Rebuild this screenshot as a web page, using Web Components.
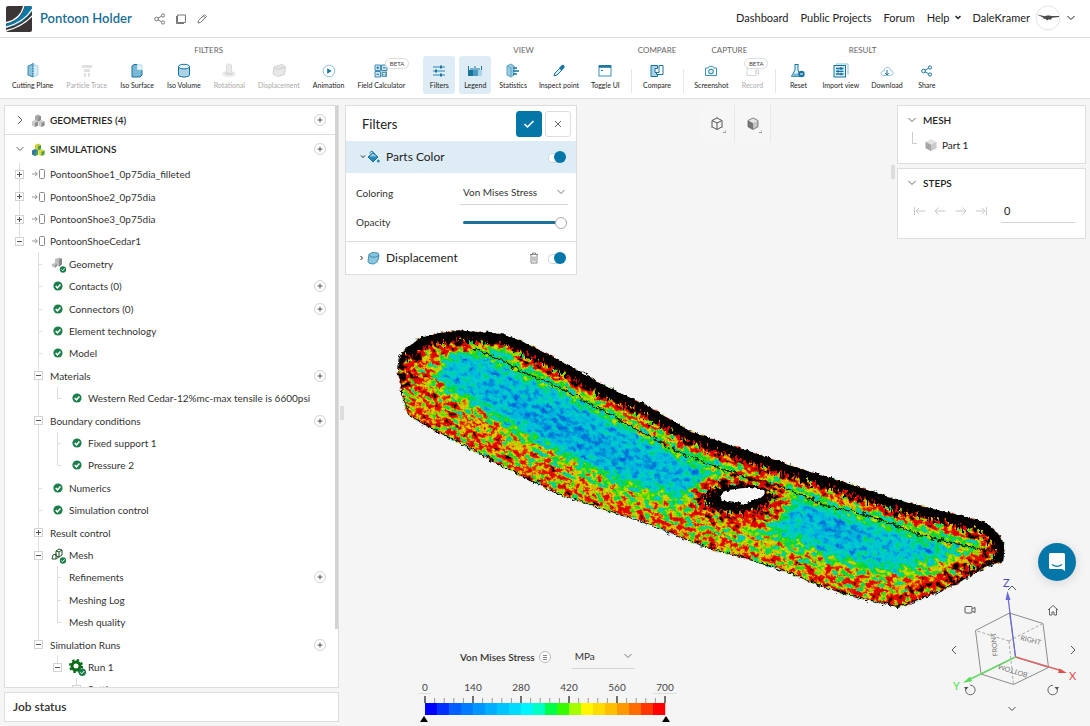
<!DOCTYPE html>
<html lang="en">
<head>
<meta charset="utf-8">
<title>Pontoon Holder</title>
<style>
html,body{margin:0;height:100%}
body{font:10px/14px Lato,"Open Sans",sans-serif;color:#333;background:#f5f5f5}
</style>
</head>
<body>
<sim-workbench></sim-workbench>
<script>
const BASE = `*{box-sizing:border-box}
:host{display:block}:host([hidden]){display:none}
button,input,select{font:inherit;color:inherit;margin:0;padding:0;border:0;background:none}
button{display:inline-flex;align-items:center;justify-content:center;cursor:pointer}
a{color:inherit;text-decoration:none}h1,h2,h3{margin:0;font:inherit}`;

function define(name, css, html) {
  customElements.define(name, class extends HTMLElement {
    connectedCallback() {
      if (this.shadowRoot) return;
      const root = this.attachShadow({ mode: 'open' });
      const t = document.createElement('template');
      t.innerHTML = `<style>${BASE}${css}</style>${typeof html === 'function' ? html(this) : html}`;
      root.append(document.importNode(t.content, true));
    }
  });
}

const B = '#16749f';
const check = (x, y, r) => `<circle cx="${x}" cy="${y}" r="${r}" fill="#1a7f4b"/><path d="M${x - r * .5} ${y}l${r * .38} ${r * .4} ${r * .65} ${-r * .75}" fill="none" stroke="#fff" stroke-width="${r > 4 ? 1.5 : 1}"/>`;
const ICONS = {
  logo: [26, 26, `<defs><clipPath id="c"><rect width="26" height="26" rx="2"/></clipPath></defs><g clip-path="url(#c)"><rect width="26" height="26" fill="#3b3635"/><path d="M0 18C11 15 18 8 19-1h8v5C21 14 12 20 0 22z" fill="#0f76a6"/><path d="M-1 17C9 15 16 9 18-1M-1 21.500C12 18 21 12 27 2M-1 25C12 22 20 17 27 9" fill="none" stroke="#fff" stroke-width="1.300"/></g>`],
  share: [16, 14, `<g fill="none" stroke="currentColor"><circle cx="4.500" cy="7" r="1.800"/><circle cx="11" cy="3.500" r="1.600"/><circle cx="11" cy="10.500" r="1.600"/><path d="M6 6.200l3.600-2M6 7.800l3.600 2"/></g>`],
  copy: [12, 12, `<path d="M2.500 2h8v7.500h-8zM1.500 3v7.500H9" fill="none" stroke="currentColor"/>`],
  pencil: [12, 12, `<path d="M2 10l.6-2.600L8.500 1.600l2 2L4.600 9.400zM7.300 2.800l2 2" fill="none" stroke="currentColor"/>`],
  chevd: [10, 6, `<path d="M1.500 1L5 4.500 8.500 1" fill="none" stroke="currentColor"/>`],
  chevr: [6, 10, `<path d="M1 1l4 4-4 4" fill="none" stroke="currentColor"/>`],
  chevl: [6, 10, `<path d="M5 1L1 5l4 4" fill="none" stroke="currentColor"/>`],
  chevu: [10, 6, `<path d="M1 5l4-4 4 4" fill="none" stroke="currentColor"/>`],
  caret: [6, 5, `<path d="M.5 1L3 3.500 5.500 1" fill="none" stroke="currentColor" stroke-width="1.500"/>`],
  carets: [6, 4, `<path d="M1 .5l2 2 2-2" fill="none" stroke="currentColor"/>`],
  caretr: [4, 6, `<path d="M.5 1l2 2-2 2" fill="none" stroke="currentColor"/>`],
  plane: [26, 26, `<circle cx="13" cy="13" r="12" fill="#fff" stroke="#e5e5e5"/><path d="M2 9.500l8 1.700 2-.7h3l1 .6 8-.1v1l-7 .8-1 2-2-.5-2 1.200-1.500-1.800-1.500.3-1-1.500z" fill="#4a4a4a"/>`],
  cut: [14, 15, `<path d="M7 1L2 3v9l5 2z" fill="#8cc4de" stroke="${B}" stroke-width=".8"/><path d="M7 1l5 2v9l-5 2z" fill="#d8ecf5" stroke="#9ccbe0" stroke-width=".8"/><path d="M7 0v15" stroke="${B}" stroke-dasharray="1.500 1"/>`],
  trace: [14, 15, `<path d="M2 2h10v3H2zM4 6h6v3H4zM4 10h2v4H4zM8 10h2v4H8z" fill="#d5d5d5"/>`],
  isos: [14, 15, `<path d="M2 3l2-1.500h3V7h5v5l-2 2H2z" fill="#7ab9d6" stroke="${B}"/><path d="M7 2h5v5H7z" fill="#e6f3f9" stroke="#b7d9e8"/>`],
  isov: [14, 15, `<path d="M1.500 4v8c0 1 2 2 5.500 2s5.500-1 5.500-2V4" fill="#a9d3e6" stroke="${B}"/><ellipse cx="7" cy="3.600" rx="5.500" ry="2.300" fill="#e9f5fa" stroke="${B}"/>`],
  rot: [16, 15, `<ellipse cx="8" cy="11" rx="7" ry="3.300" fill="#e6e6e6"/><ellipse cx="8" cy="10" rx="4" ry="2" fill="#c4c4c4"/><path d="M5.500 2v8h5V2c0-1.300-5-1.300-5 0z" fill="#e2e2e2" stroke="#cfcfcf"/>`],
  disp: [16, 15, `<path d="M3 4l8-2.500 3.500 2-1 8-7 2L2 11z" fill="#dedede" stroke="#bdbdbd"/><path d="M3 4l3.500 2.500L14 4" fill="none" stroke="#bdbdbd"/>`],
  anim: [14, 14, `<circle cx="7" cy="7" r="5.800" fill="#fff" stroke="#8fc2da"/><path d="M5.200 4.200l4.500 2.800-4.500 2.800z" fill="${B}"/>`],
  calc: [14, 14, `<path d="M1 1h5.500v5.500H1zM7.500 1H13v5.500H7.500zM1 7.500h5.500V13H1z" fill="#cfe7f2" stroke="${B}" stroke-width=".8"/><path d="M7.500 7.500H13V13H7.500z" fill="${B}" opacity=".75"/><path d="M2.500 3.800h2.500M3.800 2.500V5M9 3.800h2.500M2.500 10.300h2.500" stroke="${B}"/><path d="M9 9.500h2.500M9 11.200h2.500" stroke="#fff"/>`],
  filters: [14, 14, `<path d="M1 3h12M1 7h12M1 11h12" stroke="#2487b3" stroke-width="1.200"/><path d="M9 1.500v3M4 5.500v3M9 9.500v3" stroke="${B}" stroke-width="2"/>`],
  legend: [14, 14, `<rect x="0" y="6" width="14" height="6" fill="#a9d3e6"/><rect x="0" y="6" width="10" height="6" fill="#4a9bc0"/><rect x="0" y="6" width="5" height="6" fill="${B}"/><path d="M.5 6V2M3 6V4M5 6V4M7 6V2M9 6V4M11 6V4M13.500 6V2" stroke="${B}"/>`],
  stats: [16, 15, `<path d="M2 3l4-2 3 2v9l-3 2-4-2z" fill="#9ccbe0" stroke="#5aa5c8"/><path d="M2 3l4 2v9" fill="none" stroke="#5aa5c8"/><path d="M8 5h4M8 8h6M8 11h4" stroke="${B}" stroke-width="1.500"/>`],
  dropper: [14, 14, `<path d="M2 12l1-3 5-5 2 2-5 5z" fill="#d8ecf5" stroke="${B}"/><path d="M7 4l3-3c1-.8 3.500 1 2.500 2.500l-3 3.200z" fill="${B}"/>`],
  win: [14, 14, `<rect x="1" y="1.500" width="12" height="10.500" fill="#fff" stroke="#3c92b8"/><path d="M1 2.500h12" stroke="${B}" stroke-width="2.500"/><path d="M3 6.500h2" stroke="${B}"/>`],
  cmp: [14, 14, `<path d="M1 1.500h6.500v3H5v4h2.500v4H1z" fill="#a9d3e6" stroke="${B}"/><path d="M9 1.500h4v9H6.500v-2H9z" fill="#fff" stroke="${B}"/>`],
  shot: [14, 14, `<path d="M1.500 4h2.800l1-1.700h3.400l1 1.700h2.800v7.500h-11z" fill="#fff" stroke="#3c92b8"/><circle cx="7" cy="7.500" r="2.400" fill="#d8ecf5" stroke="${B}"/>`],
  rec: [14, 14, `<path d="M1 2h9M2 4.500h9v7H2zM11 7l2.500-1.200v4.400L11 9z" fill="none" stroke="#c4c4c4"/>`],
  reset: [16, 15, `<path d="M4.500 1.500h4M5 2v5l-3.500 6.500h9L8 7V2" fill="#e0f0f7" stroke="${B}"/><path d="M3 10.500h6l1.500 3h-9z" fill="#7ab9d6"/><circle cx="11.500" cy="11" r="3.200" fill="${B}"/><path d="M10 11h3" stroke="#fff"/>`],
  imp: [16, 15, `<path d="M3 1h12v11" fill="none" stroke="#8fc2da"/><rect x="1" y="2.500" width="11.500" height="11.500" fill="#d8ecf5" stroke="${B}"/><path d="M3 5.500h7.500M3 8.300h7.500M3 11h7.500M8 4v3M5 7v2.600M8 9.700v2.600" stroke="${B}" stroke-width="1.300"/>`],
  cloud: [14, 14, `<path d="M4 11.500c-4 0-3.600-5 .2-4.600C4.500 2 11 2.500 10.500 6.500c3.600 0 3.200 5 0 5z" fill="#fff" stroke="#8fc2da"/><path d="M7 6v5M5.200 9L7 11l1.800-2" fill="none" stroke="${B}"/>`],
  geo: [14, 13, `<path d="M4 2l3-1.500L10 2v4L7 7.500 4 6z" fill="#a8a8a8"/><path d="M1 7.500L4 6l3 1.500v4L4 13l-3-1.500zM7.500 7.500L10.500 6l3 1.500v4l-3 1.500-3-1.500z" fill="#c9c9c9"/><path d="M4 9v4l3-1.500v-4zM10.500 9v4l3-1.500v-4zM7 3.500v4L10 6V2z" fill="#8b8b8b"/>`],
  sim: [14, 13, `<path d="M4 2l3-1.500L10 2v4L7 7.500 4 6z" fill="#c6cf2c"/><path d="M1 7.500L4 6l3 1.500v4L4 13l-3-1.500z" fill="#2f78a5"/><path d="M7.500 7.500L10.500 6l3 1.500v4l-3 1.500-3-1.500z" fill="#d3d834"/><path d="M4 9v4l3-1.500v-4zM10.500 9v4l3-1.500v-4zM7 3.500v4L10 6V2z" fill="#4b9b50"/>`],
  arrowbox: [14, 12, `<path d="M0 6h5M3 4l2.500 2L3 8" fill="none" stroke="#999"/><rect x="7.500" y="1.500" width="5" height="9" rx="1" fill="#fff" stroke="#8a8a8a"/>`],
  ok: [12, 12, check(6, 6, 4.6)],
  geok: [16, 18, `<path d="M5 4l4-1.500 3 1v6l-3 2-2-1-2 2-3-1V9l3-1z" fill="#bdbdbd"/><path d="M9 4.500v7l3-2V3.500zM5 10.500V13l2-2V9z" fill="#888"/>${check(13, 14.5, 3.2)}`],
  meshok: [16, 18, `<path d="M6 5l3-2 3 1v5L9 11 6 10zM6 5l3 1v5M9 6l3-2M3 9l3-1v5H2zM6 13l3-2" fill="#fff" stroke="#244f24"/>${check(13, 14.5, 3.2)}`],
  gearok: [19, 20, `<circle cx="9" cy="9" r="4" fill="none" stroke="#0c6b17" stroke-width="3"/><circle cx="9" cy="9" r="6" fill="none" stroke="#0c6b17" stroke-width="2.200" stroke-dasharray="2.360 2.360"/>${check(15.3, 15.3, 3.7)}`],
  bucket: [14, 14, `<path d="M2 7l5-4.500 5 4.500-5 5z" fill="#2b88b5" stroke="${B}"/><path d="M3.500 6.500h7L7 3.500z" fill="#9ccbe0"/><path d="M4 3.500C4 0 8 1 8 4" fill="none" stroke="${B}"/><circle cx="12.300" cy="11" r="1.500" fill="#2b88b5"/>`],
  dispb: [14, 14, `<path d="M3 3.500l3-2 6 .5 1 2.500-1.500 6L8 13l-4.500-.5L2 10.500z" fill="#8cc4de" stroke="#3c92b8"/><path d="M3 3.500l1.500 2.300 5 .4L13 4.500" fill="none" stroke="#3c92b8"/>`],
  trash: [10, 12, `<path d="M1 2.500h8M3.500 2.500V1h3v1.500M2 3v8h6V3M4 4.500v5M6 4.500v5" fill="none" stroke="#858585"/>`],
  tick: [12, 10, `<path d="M1.500 5l3 3 6-6" fill="none" stroke="#fff" stroke-width="1.500"/>`],
  cross: [8, 8, `<path d="M1 1l6 6M7 1L1 7" fill="none" stroke="#666"/>`],
  cubew: [18, 18, `<path d="M9 3l5 2.500v6.300L9 14.500 4 11.800V5.500zM4 5.500l5 2.500 5-2.500M9 8v6.500" fill="none" stroke="#555"/><path d="M9 1.500V3M2.800 12.500l1.200-.7M15.200 12.500l-1.200-.7" stroke="#999"/><path d="M15 17.500h3v-2.500" fill="none" stroke="#999"/>`],
  cubes: [18, 18, `<path d="M9 3l5 2.500L9 8 4 5.500z" fill="#e6e6e6"/><path d="M4 5.500L9 8v6.500l-5-2.700z" fill="#757575"/><path d="M14 5.500L9 8v6.500l5-2.700z" fill="#c4c4c4"/><path d="M9 3l5 2.500v6.300L9 14.500 4 11.800V5.500z" fill="none" stroke="#666" stroke-width=".8"/><path d="M15 17.500h3v-2.500" fill="none" stroke="#999"/>`],
  part: [12, 14, `<path d="M6 1l5.500 2.700L6 6.500.5 3.700z" fill="#e4e4e4"/><path d="M.5 3.700L6 6.500V13L.5 10.200z" fill="#a6a6a6"/><path d="M11.500 3.700L6 6.500V13l5.500-2.800z" fill="#cacaca"/>`],
  first: [12, 10, `<path d="M1.500 1v8M3 5h9M6 2L3 5l3 3" fill="none" stroke="#c8c8c8"/>`],
  prev: [12, 10, `<path d="M1 5h10.500M4.500 1.500L1 5l3.500 3.500" fill="none" stroke="#c8c8c8"/>`],
  next: [12, 10, `<path d="M.5 5H11M7.500 1.500L11 5 7.500 8.500" fill="none" stroke="#c8c8c8"/>`],
  last: [12, 10, `<path d="M10.500 1v8M0 5h9M6 2l3 3-3 3" fill="none" stroke="#c8c8c8"/>`],
  cam: [12, 10, `<rect x="1" y="1.500" width="7" height="6.500" rx="1" fill="none" stroke="#555"/><path d="M8.500 3.500l2.500-1v5l-2.500-1" fill="none" stroke="#555"/>`],
  home: [12, 12, `<path d="M1 6l5-4.500L11 6M2.500 5v6h2.500V8h2v3h2.500V5" fill="none" stroke="#666"/>`],
  ccw: [14, 14, `<path d="M3.200 4.500a4.800 4.800 0 1 0 4-2.300" fill="none" stroke="#666"/><path d="M1 4h4.500L3 7z" fill="#555"/>`],
  cw: [14, 14, `<path d="M10.800 4.500a4.800 4.800 0 1 1-4-2.300" fill="none" stroke="#666"/><path d="M13 4H8.500L11 7z" fill="#555"/>`],
  chat: [20, 20, `<path d="M3.500 1h13A1.500 1.500 0 0 1 18 2.500V19l-3-2H3.500A1.500 1.500 0 0 1 2 15.500v-13A1.500 1.500 0 0 1 3.500 1z" fill="#fff"/><path d="M5 12.500c3 2.200 7 2.200 10 0" fill="none" stroke="#0576a8" stroke-width="1.300"/>`]
};
define('ui-icon', `:host{display:inline-flex;flex:none}svg{display:block}`, el => {
  const [w, h, body] = ICONS[el.getAttribute('name')];
  return `<svg width="${w}" height="${h}" viewBox="0 0 ${w} ${h}" aria-hidden="true">${body}</svg>`;
});
const icon = n => `<ui-icon name="${n}"></ui-icon>`;

define('add-button', `:host{display:inline-flex}
button{width:12px;height:12px;border:1px solid #d2d2d2;border-radius:50%;background:#fff}`,
`<button aria-label="Add"><svg width="6" height="6" viewBox="0 0 6 6"><path d="M3 .5v5M.5 3h5" stroke="#555"/></svg></button>`);

/* Top bar */
define('app-header', `:host{display:flex;align-items:center;height:38px;padding:0 14px 0 6px;background:#fff;border-bottom:1px solid #ddd}
h1{margin-left:8px;font-size:13px;color:#176d94;font-weight:600;line-height:18px;padding-bottom:2px}
.acts{display:flex;gap:4px;margin-left:20px;color:#777;padding-top:1px}.acts button{width:17px}
nav{display:flex;align-items:center;gap:12px;margin-left:auto;color:#222;font-size:11px;padding-bottom:2px}
nav a,nav button{display:inline-flex;align-items:center;gap:5px}`,
`${icon('logo')}<h1>Pontoon Holder</h1>
<div class="acts"><button aria-label="Share">${icon('share')}</button><button aria-label="Copy">${icon('copy')}</button><button aria-label="Rename">${icon('pencil')}</button></div>
<nav><a href="#dashboard">Dashboard</a><a href="#projects">Public Projects</a><a href="#forum">Forum</a><button>Help ${icon('caret')}</button><button>DaleKramer ${icon('plane')}${icon('chevd')}</button></nav>`);

/* Tool bar */
define('tool-button', `:host{position:relative;color:#222}
button{flex-direction:column;justify-content:flex-start;gap:1px;min-width:32px;height:38px;padding:7px 4px 0;border-radius:3px;font-size:7px;line-height:12px;white-space:nowrap}
ui-icon{height:15px;align-items:center;color:#16749f}
:host([off]) button{color:#aaa}:host([off]) ui-icon{opacity:.7}
:host([on]) button{background:#deedf5}
.b{position:absolute;top:2px;right:0;padding:0 4px;border:1px solid #ddd;border-radius:6px;background:#fff;color:#444;font-size:6px;line-height:9px}`,
el => `<button${el.hasAttribute('off') ? ' disabled' : ''}>${icon(el.getAttribute('icon'))}<span><slot></slot></span></button>${el.hasAttribute('beta') ? '<span class="b">BETA</span>' : ''}`);
define('tool-group', `:host{display:flex;flex-direction:column;align-items:center;position:relative}
h2{font-size:8px;line-height:12px;color:#666;text-transform:uppercase}
div{display:flex;gap:4px}:host([wide]) div{gap:5px}
:host([rule])::before{content:"";position:absolute;left:-7px;top:25px;height:24px;border-left:1px solid #e6e6e6}`,
el => `<h2>${el.getAttribute('label')}</h2><div><slot></slot></div>`);
define('tool-bar', `:host{display:flex;gap:14px;height:61px;padding:6px 8px 0;background:#fff;border-bottom:1px solid #ddd;flex:none}`, () => {
  const b = (n, t, a = '') => `<tool-button icon="${n}" ${a}>${t}</tool-button>`;
  return `<tool-group wide label="Filters">${b('cut', 'Cutting Plane')}${b('trace', 'Particle Trace', 'off')}${b('isos', 'Iso Surface')}${b('isov', 'Iso Volume')}${b('rot', 'Rotational', 'off')}${b('disp', 'Displacement', 'off')}${b('anim', 'Animation')}${b('calc', 'Field Calculator', 'beta')}</tool-group>
<tool-group label="View">${b('filters', 'Filters', 'on')}${b('legend', 'Legend', 'on')}${b('stats', 'Statistics')}${b('dropper', 'Inspect point')}${b('win', 'Toggle UI')}</tool-group>
<tool-group rule label="Compare">${b('cmp', 'Compare')}</tool-group>
<tool-group rule label="Capture">${b('shot', 'Screenshot')}${b('rec', 'Record', 'off beta')}</tool-group>
<tool-group rule label="Result">${b('reset', 'Reset')}${b('imp', 'Import view')}${b('cloud', 'Download')}${b('share', 'Share')}</tool-group>`;
});

/* Tree row: the cells string gives one 19px column per character.
   _ blank, | line, T branch, L last branch, p/m plus/minus on a line, P/M plus/minus ending a line */
define('tree-row', `:host{display:flex;align-items:center;padding:0 12px 0 5px;color:#333;white-space:nowrap;min-height:0}
.c{flex:none;width:19px;align-self:stretch;display:flex;align-items:center;justify-content:center;position:relative}
.v::before{content:"";position:absolute;left:9px;top:0;bottom:0;border-left:1px solid #ddd}
.e::before{bottom:50%}
.t::after{content:"";position:absolute;left:9px;top:50%;width:4px;border-top:1px solid #ddd}
.c button{position:relative;width:9px;height:9px;border:1px solid #d2d2d2;background:#fff}
.x{margin-left:2px}add-button{margin-left:auto}`, el => {
  const cell = { _: '', '|': 'v', T: 'v t', L: 'v e t', p: 'v', m: 'v', P: 'v e', M: 'v e' };
  const cells = [...el.getAttribute('cells')].map(k => {
    const sign = /p/i.test(k) ? 'M2.500 0v5M0 2.500h5' : /m/i.test(k) ? 'M0 2.500h5' : '';
    return `<span class="c ${cell[k]}">${sign ? `<button aria-label="${/p/i.test(k) ? 'Expand' : 'Collapse'}"><svg width="5" height="5"><path d="${sign}" stroke="#555"/></svg></button>` : ''}</span>`;
  }).join('');
  const i = el.getAttribute('icon');
  return `${cells}${i ? `<span class="c">${icon(i)}</span>` : ''}<span class="x"><slot></slot></span>${el.hasAttribute('add') ? '<add-button></add-button>' : ''}`;
});
define('section-title', `:host{display:flex;align-items:center;height:28px;padding:0 12px 0 8px;font-weight:600;color:#222;font-size:10px}
:host(:first-child){height:29px}
.k{width:14px;display:flex;justify-content:center;color:#666}.i{margin:0 4px 0 2px;width:17px;display:flex;justify-content:center}add-button{margin-left:auto}`,
el => `<span class="k">${icon(el.hasAttribute('open') ? 'chevd' : 'chevr')}</span><span class="i">${icon(el.getAttribute('icon'))}</span><h2><slot></slot></h2><add-button></add-button>`);
define('side-tree', `:host{display:flex;flex-direction:column;gap:4px;min-height:0}
.panel{position:relative;flex:1;min-height:0;overflow:hidden;background:#fff;border:1px solid #ddd}
.job{height:30px;padding:0 8px;background:#fff;border:1px solid #ddd;font-size:12px;line-height:28px;font-weight:600}
.rows{display:grid;grid-auto-rows:22px 23px 22px 22px 23px}
.thumb{position:absolute;right:0;top:0;width:3px;height:90%;background:#d2d2d2}
.line{border-bottom:1px solid #ddd}`, () => {
  const r = (c, t, i = '', a = '') => `<tree-row cells="${c}" ${i && `icon="${i}"`} ${a}>${t}</tree-row>`;
  return `<div class="panel"><div><section-title class="line" icon="geo">GEOMETRIES (4)</section-title><section-title icon="sim" open>SIMULATIONS</section-title></div>
<div class="rows">${r('p', 'PontoonShoe1_0p75dia_filleted', 'arrowbox')}${r('p', 'PontoonShoe2_0p75dia', 'arrowbox')}${r('p', 'PontoonShoe3_0p75dia', 'arrowbox')}${r('M', 'PontoonShoeCedar1', 'arrowbox')}
${r('_T', 'Geometry', 'geok')}${r('_T', 'Contacts (0)', 'ok', 'add')}${r('_T', 'Connectors (0)', 'ok', 'add')}${r('_T', 'Element technology', 'ok')}${r('_T', 'Model', 'ok')}
${r('_m', 'Materials', '', 'add')}${r('_|L', 'Western Red Cedar-12%mc-max tensile is 6600psi', 'ok')}
${r('_m', 'Boundary conditions', '', 'add')}${r('_|T', 'Fixed support 1', 'ok')}${r('_|L', 'Pressure 2', 'ok')}
${r('_T', 'Numerics', 'ok')}${r('_T', 'Simulation control', 'ok')}${r('_p', 'Result control')}${r('_m', 'Mesh', 'meshok')}
${r('_|T', 'Refinements', '', 'add')}${r('_|T', 'Meshing Log')}${r('_|L', 'Mesh quality')}${r('_M', 'Simulation Runs', '', 'add')}
${r('__M', 'Run 1', 'gearok')}${r('___P', 'Settings')}</div><div class="thumb"></div></div><h2 class="job">Job status</h2>`;
});

/* Filters panel */
define('toggle-switch', `:host{display:inline-flex}
input{appearance:none;width:18px;height:12px;position:relative}
input::before{content:"";position:absolute;left:0;top:2px;width:12px;height:8px;border:1px solid #ccdbe2;border-radius:4px;background:#fff}
input::after{content:"";position:absolute;right:0;top:0;width:12px;height:12px;border-radius:50%;background:#0576a8}`,
el => `<input type="checkbox" checked aria-label="${el.getAttribute('label')}">`);
define('drop-down', `:host{display:inline-flex;position:relative;border-bottom:1px solid #d5d5d5;color:#333}
select{appearance:none;width:100%;height:24px;padding:0 16px 0 3px;outline:0}
ui-icon{position:absolute;right:2px;top:9px;color:#777;pointer-events:none}`,
el => `<select aria-label="${el.getAttribute('label')}"><option>${el.getAttribute('value')}</option></select>${icon('chevd')}`);
define('filter-panel', `:host{width:232px;background:#fff;border:1px solid #ddd}
header{display:flex;align-items:center;height:35px;padding:0 5px 0 16px;gap:3px}
h2{font-size:13px;margin-right:auto;color:#222}
header button{width:26px;height:26px;border:1px solid #ddd;border-radius:3px}header .ok{background:#0576a8;border-color:#0576a8}
.bar{display:flex;align-items:center;height:32px;padding:0 10px 0 14px;font-size:12px;color:#222}
.bar h3{margin:0 auto 0 6px}.bar toggle-switch{margin-left:9px}.bar .k{width:6px;display:flex}
.on{background:#deedf5}
.form{display:grid;grid-template-columns:104px 1fr;align-items:center;padding:7px 8px 6px 10px;row-gap:4px;border-bottom:1px solid #ddd}
.form input{appearance:none;height:26px;width:104px;margin-left:3px}
input::-webkit-slider-runnable-track{height:3px;border-radius:2px;background:#1a729b}
input::-webkit-slider-thumb{appearance:none;width:12px;height:12px;margin-top:-4px;border:1px solid #aaa;border-radius:50%;background:#fff}`,
`<header><h2>Filters</h2><button class="ok" aria-label="Apply">${icon('tick')}</button><button aria-label="Close">${icon('cross')}</button></header>
<div class="bar on"><span class="k">${icon('carets')}</span>${icon('bucket')}<h3>Parts Color</h3><toggle-switch label="Parts Color"></toggle-switch></div>
<div class="form"><span>Coloring</span><drop-down label="Coloring" value="Von Mises Stress"></drop-down><label for="op">Opacity</label><input id="op" type="range" value="100"></div>
<div class="bar"><span class="k">${icon('caretr')}</span>${icon('dispb')}<h3>Displacement</h3><button aria-label="Delete">${icon('trash')}</button><toggle-switch label="Displacement"></toggle-switch></div>`);

define('view-tools', `:host{display:flex;width:72px;height:37px;margin-right:4px;background:#f6f6f6}
button{flex:1;border-right:1px solid #e8e8e8}`,
`<button aria-label="Wireframe">${icon('cubew')}</button><button aria-label="Surface">${icon('cubes')}</button>`);

/* Right column */
define('result-panels', `:host{display:grid;gap:4px;width:189px;position:relative}
section{background:#fff;border:1px solid #ddd;padding:7px 10px 0 9px;color:#222}
h2{display:flex;align-items:center;gap:6px;font-weight:600;font-size:10px;line-height:14px;color:#222}h2 ui-icon{color:#666}
.mesh{height:59px}.steps{height:71px}
.part{display:flex;align-items:center;gap:5px;margin:11px 0 0 5px;padding-left:13px;position:relative}
.part::before{content:"";position:absolute;left:0;top:-6px;width:4px;height:11px;border:solid #ccc;border-width:0 0 1px 1px}
.nav{display:flex;align-items:center;gap:9px;margin:9px 0 0 6px}
.nav input{width:74px;height:24px;padding:0 3px;border-bottom:1px solid #d5d5d5;margin-left:4px;outline:0;font-size:11px}
.grip{position:absolute;left:-6px;top:60px;width:4px;height:14px;background:#ddd}`,
`<section class="mesh"><h2>${icon('chevd')}MESH</h2><div class="part">${icon('part')}Part 1</div></section>
<section class="steps"><h2>${icon('chevd')}STEPS</h2><div class="nav"><button aria-label="First">${icon('first')}</button><button aria-label="Previous">${icon('prev')}</button><button aria-label="Next">${icon('next')}</button><button aria-label="Last">${icon('last')}</button><input aria-label="Step" value="0"></div></section><span class="grip"></span>`);

/* Colour scale */
const SCALE = ['#00f', '#0030ff', '#0060ff', '#007dff', '#0095ff', '#00aeff', '#00c4ff', '#00dcff', '#00f5ff', '#00ffc4', '#00ff48', '#35fa00', '#a5ff00', '#fff600', '#ffdc00', '#ffbf00', '#ff9900', '#ff6c00', '#ff3600', '#f00'];
define('color-legend', `:host{width:288px}
.top{display:flex;align-items:center;gap:4px;padding-left:59px;margin-bottom:12px}
.top b{font-weight:600}.top button{width:12px;height:12px;border:1px solid #bbb;border-radius:50%;background:#fff}
drop-down{width:63px;margin-left:17px}
.n{display:grid;grid-template-columns:repeat(6,1fr);justify-items:center;font-size:10px;line-height:12px;color:#444}
.n span:first-child,.n span:last-child{border-bottom:1px solid #ddd;padding:0 3px}
svg{display:block;margin:0 auto}`, () => {
  let s = '';
  SCALE.forEach((c, i) => s += `<rect x="${5 + i * 12}" y="9" width="12.200" height="12" fill="${c}"/>`);
  for (let i = 0; i <= 25; i++) s += `<path d="M${5 + i * 9.6} 9V${i % 5 ? 4 : 2}" stroke="${i % 5 ? '#999' : '#444'}" stroke-width="${i % 5 ? 1 : 1.5}"/>`;
  return `<div class="top"><b>Von Mises Stress</b><button aria-label="Options"><svg width="6" height="6"><path d="M1 1.500h4M1 3.500h4M1 5.500h4" stroke="#666" stroke-width=".8"/></svg></button><drop-down label="Unit" value="MPa"></drop-down></div>
<div class="n"><span>0</span><span>140</span><span>280</span><span>420</span><span>560</span><span>700</span></div>
<svg width="250" height="29" viewBox="0 0 250 29">${s}<path d="M0 28l4-6 4 6zM242 28l4-6 4 6z"/></svg>`;
});

/* Orientation cube */
define('nav-cube', `:host{display:grid;grid-template:36px 1fr 33px/30px 1fr 34px;width:133px;height:135px}
button{width:14px;height:14px;color:#555;position:relative}
.e{justify-self:end}.b{align-self:end}.m{align-self:center}.c{justify-self:center}
svg{position:absolute;left:0;top:0;width:133px;height:135px;overflow:visible}
.r{grid-column:3}text{font:7px Lato,sans-serif;fill:#777}.ax{font-size:11px}`,
`<svg viewBox="947 581 133 135"><g fill="none" stroke="#8c8c8c"><path d="M1009.500 613l-34 17.500 5.500 43.500 32.500 10.500 35-17-5.500-44zM981 674l34.500-17 33 10.500M1015.500 657l-6-44"/><path d="M1009 641l-33.500-10.500M1009 641l34-17.500M1009 641l4.500 43.500" stroke="#aaa" stroke-dasharray="3 2"/></g>
<path d="M1015.500 657l-7.500-60" stroke="#6a6ad8" stroke-width="1.200"/><path d="M1007.500 591l3 9h-5z" fill="#6a6ad8"/>
<path d="M1015.500 657l47 14" stroke="#d86a6a" stroke-width="1.500"/><path d="M1067 673l-9 0 1.500-4.500z" fill="#e05050"/>
<path d="M1015.500 657l-46 22.500" stroke="#67d867" stroke-width="1.500"/><path d="M963 683l9-2-2-4.500z" fill="#55e055"/>
<text class="ax" x="1003" y="587" style="fill:#4b4bb5">Z</text><text class="ax" x="1069" y="680" style="fill:#e04b4b">X</text><text class="ax" x="953" y="690" style="fill:#4be04b">Y</text>
<text transform="translate(998 656) rotate(-96)">FRONT</text><text transform="translate(1020 640) rotate(14)">RIGHT</text><text transform="translate(1028 673) rotate(197)">BOTTOM</text></svg>
<button class="e b" aria-label="Projection">${icon('cam')}</button><button class="c" aria-label="Up">${icon('chevu')}</button><button class="b" aria-label="Home">${icon('home')}</button>
<button class="m" aria-label="Left">${icon('chevl')}</button><button class="r e m" aria-label="Right">${icon('chevr')}</button>
<button class="e" aria-label="Rotate left">${icon('ccw')}</button><button class="c b" aria-label="Down">${icon('chevd')}</button><button aria-label="Rotate right">${icon('cw')}</button>`);

/* Stress plot: grey levels hold the stress field, a filter adds mesh noise and maps it to the scale */
define('stress-model', `svg{display:block;width:100%;height:100%}`, () => {
  const ramp = ['0020d0', '0038d0', '0058d8', '0070d8', '0090d8', '00b4dc', '00c8d4', '00d0c0', '00d488', '00d444', '40d800', '98dc00', 'd8d800', 'e0b000', 'e03000', 'e01000', 'e00000', 'e00000', 'd80000', '000000'];
  const chan = k => ramp.map(c => (parseInt(c.slice(k * 2, k * 2 + 2), 16) / 255).toFixed(2)).join(' ');
  const g = v => `rgb(${v},${v},${v})`;
  const outline = 'M397 371L399 356 406 348 420 338 440 333 463 331 500 334 520 341 550 356 600 384 650 408 690 432 740 449 800 469 860 488 893 499 930 509 960 516 985 523 998 534 1004 546 1003 561 985 567 955 585 900 608 860 599 830 590 790 574 740 557 715 551 685 540 650 525 600 509 552 492 512 472 458 443 442 435 407 415 402 400 400 385z';
  const rim = 'M399 385L399 356 406 346 420 337 440 332 463 330 500 333 520 340 550 355 600 383 650 407 690 431 740 448 800 468 860 487 893 498 930 508 960 515 985 522 998 532 1005 546';
  const top = 'M404 350L420 338 440 333 463 331 500 334 520 341 550 356 600 384 650 408 690 432 740 449 800 469 860 488 893 499 930 509 960 516 985 523 998 534 1004 546 1004 562';
  const seam = 'M473 349L500 359 518 370 558 387 605 412 632 427 678 452 715 467 740 475 790 490 823 505 873 517 920 535 973 548 1003 553';
  return `<svg viewBox="338 99 752 627" role="img" aria-label="Von Mises stress on the part"><defs>
<clipPath id="o"><path d="${outline}"/></clipPath>
<filter id="b2" x="-20%" y="-20%" width="140%" height="140%"><feGaussianBlur stdDeviation="2.500"/></filter><filter id="b5" x="-20%" y="-20%" width="140%" height="140%"><feGaussianBlur stdDeviation="5"/></filter><filter id="b9" x="-20%" y="-20%" width="140%" height="140%"><feGaussianBlur stdDeviation="9"/></filter>
<filter id="map" filterUnits="userSpaceOnUse" x="340" y="330" width="720" height="280" color-interpolation-filters="sRGB">
<feTurbulence type="fractalNoise" baseFrequency=".13 .22" numOctaves="2" seed="7"/><feColorMatrix values="1 0 0 0 0 1 0 0 0 0 1 0 0 0 0 0 0 0 0 1" result="n"/>
<feComposite in="SourceGraphic" in2="n" operator="arithmetic" k1="1.700" k2=".15" result="s"/>
<feComponentTransfer in="s"><feFuncR type="discrete" tableValues="${chan(0)}"/><feFuncG type="discrete" tableValues="${chan(1)}"/><feFuncB type="discrete" tableValues="${chan(2)}"/></feComponentTransfer>
<feComposite in2="SourceAlpha" operator="in" result="col"/>
<feTurbulence type="fractalNoise" baseFrequency=".25" numOctaves="2" seed="3" result="d"/><feDisplacementMap in="col" in2="d" scale="5" xChannelSelector="R" yChannelSelector="G"/></filter>
<filter id="rag" x="-20%" y="-20%" width="140%" height="140%"><feTurbulence type="fractalNoise" baseFrequency=".2" numOctaves="3" seed="5"/><feDisplacementMap in="SourceGraphic" scale="7" xChannelSelector="R" yChannelSelector="G"/></filter>
<filter id="rough" x="-20%" y="-20%" width="140%" height="140%"><feTurbulence type="fractalNoise" baseFrequency=".45 .2" numOctaves="2" seed="9"/><feDisplacementMap in="SourceGraphic" scale="22" xChannelSelector="R" yChannelSelector="G"/></filter></defs>
<g transform="rotate(24 700 470)" filter="url(#map)"><g transform="rotate(-24 700 470)"><g clip-path="url(#o)"><rect x="385" y="320" width="630" height="300" fill="${g(176)}"/>
<path d="M430 362L470 338 1000 545 900 580 830 565 740 540 690 520 600 485 520 445z" fill="${g(130)}" filter="url(#b9)"/>
<path d="M435 375L452 352 490 358 560 390 680 455 715 470 705 500 650 488 610 476 560 450 490 412 455 395z" fill="${g(80)}" filter="url(#b5)"/>
<path d="M765 525L800 497 850 512 920 538 965 549 930 562 880 570 830 556z" fill="${g(82)}" filter="url(#b5)"/>
<path d="M480 385L560 410 640 455 690 478 620 466 550 440z" fill="${g(64)}" filter="url(#b5)"/>
<path d="M800 510L830 515 870 545 830 540z" fill="${g(60)}" filter="url(#b5)"/>
<path d="M400 345L400 420" fill="none" stroke="${g(205)}" stroke-width="44" filter="url(#b5)"/>
<path d="${rim}" fill="none" stroke="${g(200)}" stroke-width="40" filter="url(#b2)"/>
<path d="${seam}" fill="none" stroke="${g(125)}" stroke-width="11" filter="url(#b2)"/>
<path d="${rim}" fill="none" stroke="${g(250)}" stroke-width="17" filter="url(#b2)"/>
<path d="M488 348L512 358" stroke="${g(95)}" stroke-width="9" filter="url(#b2)"/>
<ellipse cx="738" cy="501" rx="50" ry="27" fill="${g(205)}" filter="url(#b5)"/>
<path d="M1006 552L960 582 900 610" fill="none" stroke="${g(215)}" stroke-width="30" filter="url(#b5)"/></g></g></g>
<g clip-path="url(#o)"><g filter="url(#rough)" fill="none" stroke="#000"><path d="${top}" stroke-width="19"/><path d="M1006 558L985 570 955 588" stroke-width="10"/><ellipse cx="737" cy="499" rx="33" ry="13" fill="#000"/></g></g>
<g filter="url(#rag)"><g clip-path="url(#o)" fill="none" stroke="#000"><path d="${outline}" stroke-width="2"/><path d="${top}" stroke-width="8"/></g>
<path d="${seam}" fill="none" stroke="#0a1a00" stroke-width="1.200"/><path d="M718 497L728 490 750 487 766 491 758 498 745 504 728 502z" fill="#f8f8f8" stroke="#000" stroke-width="4" paint-order="stroke"/></g></svg>`;
});

define('result-viewer', `:host{position:relative;min-height:0}
stress-model{position:absolute;inset:0}
.over{position:relative;display:flex;justify-content:space-between;align-items:flex-start;padding:6px 4px 0 6px}
.grip{position:absolute;left:1px;top:49%;width:4px;height:14px;background:#ddd}
color-legend{position:absolute;left:62px;bottom:3px}
nav-cube{position:absolute;right:10px;bottom:10px}
.chat{position:absolute;right:14px;bottom:145px;width:38px;height:38px;border-radius:50%;background:#0576a8;box-shadow:0 2px 12px #0002}`,
`<stress-model></stress-model><div class="over"><filter-panel></filter-panel><view-tools></view-tools><result-panels></result-panels></div><span class="grip"></span>
<color-legend></color-legend><nav-cube></nav-cube><button class="chat" aria-label="Open chat">${icon('chat')}</button>`);

define('sim-workbench', `:host{display:flex;flex-direction:column;height:100vh;overflow:hidden}
main{flex:1;min-height:0;display:grid;grid-template:minmax(0,1fr)/335px minmax(0,1fr);padding-left:4px}
side-tree{margin:6px 0 4px}`,
`<app-header></app-header><tool-bar></tool-bar><main><side-tree></side-tree><result-viewer></result-viewer></main>`);
</script>
</body>
</html>
